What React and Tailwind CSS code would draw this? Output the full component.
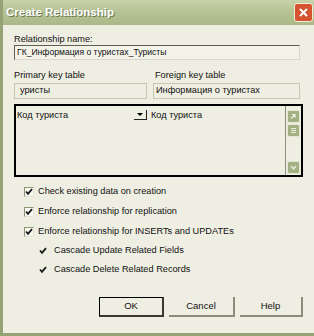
import React from "react";

const CHECKS = [
  { label: "Check existing data on creation", indent: false, h: "h-[20px]" },
  { label: "Enforce relationship for replication", indent: false, h: "h-[20px]" },
  { label: "Enforce relationship for INSERTs and UPDATEs", indent: false, h: "h-[20px]" },
  { label: "Cascade Update Related Fields", indent: true, h: "h-[18px]" },
  { label: "Cascade Delete Related Records", indent: true, h: "h-[19px]" },
];

function Tick() {
  return (
    <svg width="8" height="8" viewBox="0 0 8 8">
      <path d="M1 3.5 L3 5.8 L7 1.2" stroke="#1a1a1a" strokeWidth="1.8" fill="none" />
    </svg>
  );
}

function Check({ label, indent, h }) {
  return (
    <div className={`flex items-center ${h} ${indent ? "pl-[24px] gap-[7px]" : "pl-[10px] gap-[4px]"}`}>
      {indent ? (
        <span className="w-[9px] h-[9px] flex items-center justify-center">
          <Tick />
        </span>
      ) : (
        <span className="w-[10px] h-[10px] border border-t-[#8d9476] border-l-[#8d9476] border-r-[#e4e4d4] border-b-[#e4e4d4] bg-[#f8f8f0] flex items-center justify-center">
          <Tick />
        </span>
      )}
      <span className="text-[9.2px] text-[#111]">{label}</span>
    </div>
  );
}

function ScrollBtn({ children }) {
  return (
    <div className="w-[13px] h-[13px] rounded-[2px] bg-[#a2b084] border border-[#e4e8d0] flex items-center justify-center">
      {children}
    </div>
  );
}

export default function App() {
  return (
    <div
      className="w-[314px] h-[336px] bg-[#efeee2] flex flex-col border-l-[3px] border-b-[3px] border-[#95a274] overflow-hidden"
      style={{ fontFamily: '"Liberation Sans", "DejaVu Sans", sans-serif' }}
    >
      {/* title bar */}
      <div className="h-[25px] shrink-0 bg-gradient-to-b from-[#c8d2ab] via-[#b5c293] to-[#abb989] flex items-center justify-between pl-[6px] pr-[1px] -ml-[3px]">
        <span className="text-white font-bold text-[11.5px] [text-shadow:1px_1px_0_#6e7a52]">Create Relationship</span>
        <div className="w-[19px] h-[19px] rounded-[3px] bg-[#d5532f] border border-[#f4ead8] flex items-center justify-center">
          <svg width="11" height="11" viewBox="0 0 11 11"><path d="M2 2 L9 9 M9 2 L2 9" stroke="white" strokeWidth="2" /></svg>
        </div>
      </div>

      <div className="flex flex-col pl-[11px] pr-[11px] pt-[8px]">
        <div className="text-[9.2px] leading-[12px] text-[#111]">Relationship name:</div>
        <div className="h-[15px] w-[286px] border border-t-[#5e5e55] border-l-[#5e5e55] border-r-[#d9d8c8] border-b-[#d9d8c8] bg-[#f4f3ea] flex items-center px-[2px] text-[8.6px] text-[#111]">
          ГК_Информация о туристах_Туристы
        </div>

        <div className="flex mt-[9px] gap-[6px]">
          <div className="flex flex-col w-[133px]">
            <div className="text-[9.2px] leading-[12px] text-[#111]">Primary key table</div>
            <div className="mt-[2px] h-[16px] border border-[#c6c8ae] flex items-center px-[5px] text-[9.2px] text-[#111]">уристы</div>
          </div>
          <div className="flex flex-col w-[147px]">
            <div className="text-[9.2px] leading-[12px] pl-[2px] text-[#111]">Foreign key table</div>
            <div className="mt-[2px] h-[16px] border border-[#c6c8ae] flex items-center px-[2px] text-[9.2px] text-[#111]">Информация о туристах</div>
          </div>
        </div>

        <div className="mt-[5px] w-[289px] h-[73px] border-2 border-black flex">
          <div className="flex-1 flex items-start pt-[4px] text-[9.2px] text-[#111]">
            <div className="w-[118px] pl-[1px] h-[11px] flex items-center">Код туриста</div>
            <div className="w-[13px] h-[10px] border-r border-b border-[#222] flex items-center justify-center">
              <svg width="6" height="4" viewBox="0 0 6 4"><path d="M0 0 L6 0 L3 3 Z" fill="#000" /></svg>
            </div>
            <div className="pl-[4px] h-[11px] flex items-center">Код туриста</div>
          </div>
          <div className="w-[16px] border-l border-[#8e8e80] flex flex-col items-center justify-between pt-[4px] pb-[1px]">
            <div className="flex flex-col gap-[1px]">
              <ScrollBtn>
                <svg width="7" height="7" viewBox="0 0 7 7"><path d="M1 5.5 L5 1.5 M2 1.5 L5 1.5 L5 4.5" stroke="#eef0e0" strokeWidth="1.2" fill="none" /></svg>
              </ScrollBtn>
              <ScrollBtn>
                <svg width="7" height="7" viewBox="0 0 7 7"><path d="M1 1.5 H6 M1 3.5 H6 M1 5.5 H6" stroke="#eef0e0" strokeWidth="1" /></svg>
              </ScrollBtn>
            </div>
            <ScrollBtn>
              <svg width="7" height="7" viewBox="0 0 7 7"><path d="M1 2 L3.5 5 L6 2" stroke="#eef0e0" strokeWidth="1.4" fill="none" /></svg>
            </ScrollBtn>
          </div>
        </div>

        <div className="flex flex-col mt-[5px]">
          {CHECKS.map((c) => (
            <Check key={c.label} label={c.label} indent={c.indent} h={c.h} />
          ))}
        </div>

        <div className="flex justify-end gap-[5px] mt-[18px] pr-[0px]">
          <div className="w-[65px] h-[20px] border border-black border-r-2 border-b-2 border-r-[#3a3a30] border-b-[#3a3a30] flex items-center justify-center text-[9.5px] text-[#111] bg-[#efeee2]">OK</div>
          <div className="w-[66px] h-[20px] border-r-2 border-b-2 border-[#8c8c7a] flex items-center justify-center text-[9.5px] text-[#111]">Cancel</div>
          <div className="w-[63px] h-[20px] border-r-2 border-b-2 border-[#8c8c7a] flex items-center justify-center text-[9.5px] text-[#111]">Help</div>
        </div>
      </div>
    </div>
  );
}
